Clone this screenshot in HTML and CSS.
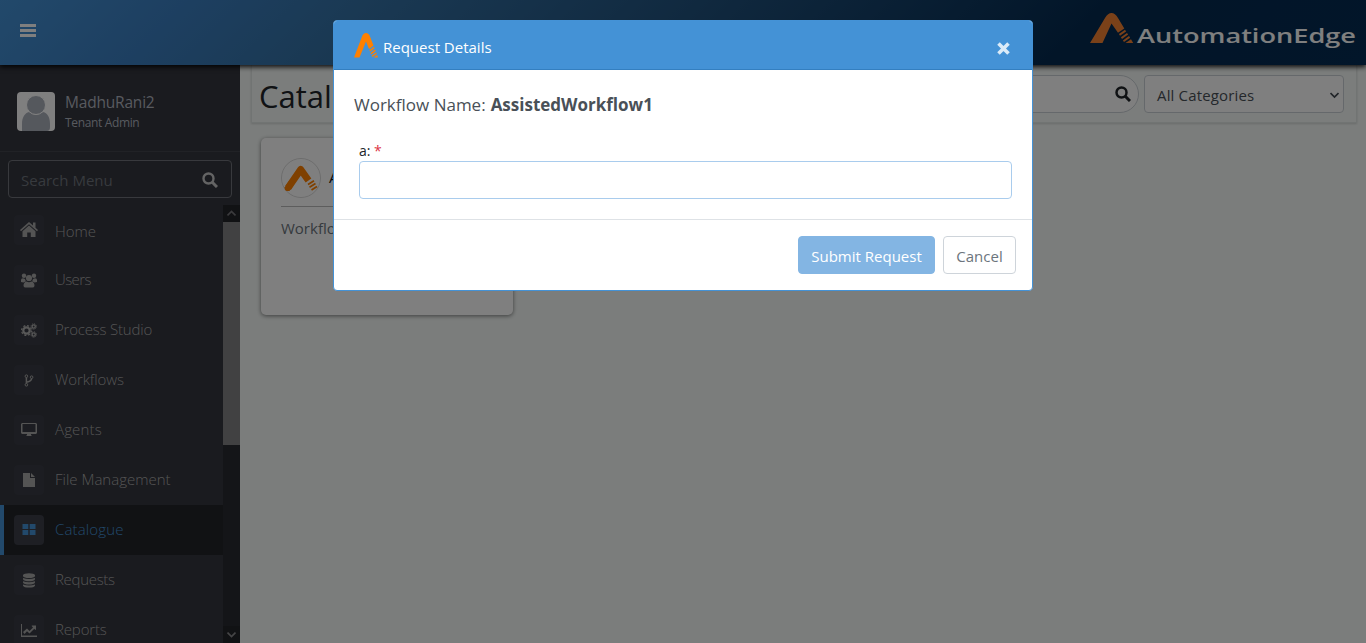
FILE: index.html
```html
<!DOCTYPE html>
<html lang="en">
<head>
<meta charset="utf-8">
<title>AutomationEdge - Catalogue</title>
<link rel="stylesheet" href="styles.css">
</head>
<body>
<div class="app">
  <header class="topbar">
    <svg class="burger" width="16" height="14" viewBox="0 0 16 14"><path fill="#fff" d="M0 0h16v3H0zM0 5h16v3H0zM0 10h16v3H0z"/></svg>
    <svg class="brand" width="270" height="40" viewBox="0 0 270 40">
      <path fill="#f58233" d="M0 31 15 6Q18 1 21.500 1T28 6L34.300 16.500 28 20.700 21.500 11.500 12.500 31zM35 17.700 28.900 22 30 23.700 36.100 19.400zM37 20.900 30.900 25.200 32 26.900 38.100 22.600zM39 24.100 32.900 28.400 34 30.100 40.100 25.800zM41 27.300 35.500 31H43.200z"/>
      <text x="47" y="31" textLength="219" lengthAdjust="spacingAndGlyphs" class="brand-text">AutomationEdge</text>
    </svg>
  </header>
  <div class="below">
    <aside class="sidebar">
      <div class="profile">
        <svg width="38" height="39" viewBox="0 0 38 39"><rect width="38" height="39" rx="4" fill="#fff"/><path fill="#abb0bb" d="M5 39V32C5 25 8 21 12 20Q19 26 26 20C31 21 33 26 33 32V35Q33 39 30 39z"/><circle cx="19" cy="13" r="9.500" fill="#abb0bb" stroke="#fff"/></svg>
        <div><div class="user">MadhuRani2</div><div class="role">Tenant Admin</div></div>
      </div>
      <div class="menu-search"><span>Search Menu</span>
        <svg width="16" height="16" viewBox="0 0 16 16" fill="none" stroke="#c8c8c8"><circle cx="6.500" cy="6.500" r="5" stroke-width="2.400"/><path stroke-width="3" d="m10 10 5 5"/></svg>
      </div>
      <div class="menu-area">
        <nav class="menu">
          <div class="item first"><span class="ico"><svg width="18" height="16" viewBox="0 0 18 16"><path d="M9 0 13 3.500V.5H15.500V5.800L18 8 17 9.200 9 2.200 1 9.200 0 8zM9 3.500 15.500 9.200V15H10.800V10.500H7.200V15H2.500V9.200z"/></svg></span><span class="lbl home">Home</span></div>
          <div class="item"><span class="ico"><svg width="16" height="15" viewBox="0 0 16 15"><circle cx="3" cy="2.800" r="2.200"/><circle cx="13" cy="2.800" r="2.200"/><circle cx="8" cy="5" r="3.100"/><path d="M0 9V7Q0 5.200 2 5.200L4 6Q4.500 8 5 8.300 3 9 2.500 9.500zM16 9V7Q16 5.200 14 5.200L12 6Q11.500 8 11 8.300 13 9 13.500 9.500zM2.500 13Q2.500 9 5.500 8.500 8 10 10.500 8.500 13.500 9 13.500 13 13 14.500 11.500 14.500H4.500Q3 14.500 2.500 13"/></svg></span><span class="lbl users">Users</span></div>
          <div class="item"><span class="ico"><svg class="line" width="16" height="15" viewBox="0 0 16 15" stroke="#b0b0b0"><circle cx="5.500" cy="7.500" r="3.200" stroke-width="2.200"/><circle cx="5.500" cy="7.500" r="4.900" stroke-width="1.300" stroke-dasharray="2 1.850"/><circle cx="12.700" cy="3.500" r="1.600" stroke-width="1.300"/><circle cx="12.700" cy="3.500" r="2.700" stroke-dasharray="1.100 1"/><circle cx="12.700" cy="11.500" r="1.600" stroke-width="1.300"/><circle cx="12.700" cy="11.500" r="2.700" stroke-dasharray="1.100 1"/></svg></span><span class="lbl process">Process Studio</span></div>
          <div class="item"><span class="ico"><svg class="line" width="10" height="13" viewBox="0 0 10 13" stroke="#aaa"><circle cx="2.400" cy="2.200" r="1.300"/><circle cx="2.400" cy="10.800" r="1.300"/><circle cx="7.600" cy="3.200" r="1.300"/><path stroke-width="1.500" d="M2.400 3.500v6M7.600 4.500Q7.600 7.300 2.400 8.300"/></svg></span><span class="lbl workflows">Workflows</span></div>
          <div class="item"><span class="ico"><svg width="16" height="14" viewBox="0 0 16 14"><path fill-rule="evenodd" d="M1 0H15L16 1V10L15 11H10V12L11 13H5L6 12V11H1L0 10V1zM1.500 1V9H14.500V1z"/></svg></span><span class="lbl agents">Agents</span></div>
          <div class="item"><span class="ico"><svg width="12" height="14" viewBox="0 0 12 14"><path d="M0 0H7V5H12V14H0zM8 0 12 4H8z"/></svg></span><span class="lbl files">File Management</span></div>
          <div class="item active"><span class="ico"><svg width="14" height="12" viewBox="0 0 14 12"><path d="M.5 0H6.300V5H.5zM7.700 0H13.500V5H7.700zM.5 6H6.300V11H.5zM7.700 6H13.500V11H7.700z"/></svg></span><span class="lbl catalogue">Catalogue</span></div>
          <div class="item"><span class="ico"><svg width="12" height="15" viewBox="0 0 12 15"><path d="M0 2Q1 .3 6 .3T12 2V3.200Q11 5 6 5T0 3.200zM0 5Q6 7 12 5V6.300Q11 8.300 6 8.300T0 6.300zM0 8.300Q6 10.300 12 8.300V9.500Q11 11.500 6 11.500T0 9.500zM0 11.500Q6 13.500 12 11.500V12.700Q11 14.600 6 14.600T0 12.700z"/></svg></span><span class="lbl requests">Requests</span></div>
          <div class="item"><span class="ico"><svg width="16" height="13" viewBox="0 0 16 13"><path d="M0 0H1V11.500H16V13H0zM2 8 6 4.500 8.500 7 12 3.500 10.800 2.300V1.500H15V5.700H14.200L13.300 4.800 8.500 9.500 6 7.200 3.500 10z"/></svg></span><span class="lbl reports">Reports</span></div>
        </nav>
        <div class="scroll">
          <div class="sbtn"><svg width="9" height="7" viewBox="0 0 9 7"><path fill="none" stroke="#77777a" stroke-width="1.700" d="m.5 5.500 4-4 4 4"/></svg></div>
          <div class="thumb"></div>
          <div class="sbtn down"><svg width="9" height="7" viewBox="0 0 9 7"><path fill="none" stroke="#8b8b8d" stroke-width="1.700" d="m.5 1.500 4 4 4-4"/></svg></div>
        </div>
      </div>
    </aside>
    <main class="main">
      <div class="titlebar">
        <h1>Catalogue</h1>
        <div class="find"><svg width="16" height="16" viewBox="0 0 16 16" fill="none" stroke="#212529"><circle cx="6.500" cy="6.500" r="5" stroke-width="2.500"/><path stroke-width="3" d="m10 10 5 5"/></svg></div>
        <div class="category"><span>All Categories</span><svg width="9" height="7" viewBox="0 0 9 7"><path fill="none" stroke="#444b52" stroke-width="1.700" d="m.5 1 4 4 4-4"/></svg></div>
      </div>
      <section class="card">
        <div class="card-head">
          <svg width="40" height="40" viewBox="0 0 40 40"><circle cx="20" cy="20" r="19.500" fill="none" stroke="#dadada"/><path fill="none" stroke="#ff8000" stroke-width="7" stroke-linejoin="round" d="M7 30 19.700 11.500 27.500 22.500"/><path fill="#ff8000" d="M3.500 29.500 8 23 12 28 8.500 33H5.500Q3.500 32.500 3.500 29.500"/><path stroke="#ff8000" stroke-width="1.800" d="m27 26.500 6-3.700M28.500 29.300l6-3.700M30.500 32l5.500-3.400"/></svg>
          <span>AssistedWorkflow1</span>
        </div>
        <p>Workflow</p>
      </section>
    </main>
  </div>
</div>
<div class="backdrop">
  <div class="dialog">
    <div class="dialog-head">
      <svg width="24" height="25" viewBox="0 0 24 25"><path fill="#ff8000" d="M0 24.500 8 3.500Q9.200 0 12 0T16 3.500L19.500 12.500 15 16 12 8.500 5.500 24.500zM20 13.800 15.400 17.200 16 18.600 20.600 15.200zM21.100 16.600 16.500 20 17.100 21.400 21.700 18zM22.200 19.400 17.600 22.800 18.200 24 22.800 20.800zM23.200 22 19.500 24.500H24z"/></svg>
      <span class="dialog-title">Request Details</span>
      <svg class="close" width="13" height="13" viewBox="0 0 13 13"><path stroke="#dbebf8" stroke-width="3.600" d="m1.500 1.500 10 10m0-10-10 10"/></svg>
    </div>
    <div class="dialog-body">
      <div class="wf"><span>Workflow Name:</span><b>AssistedWorkflow1</b></div>
      <label for="a">a: <em>*</em></label>
      <input id="a" type="text">
    </div>
    <div class="dialog-foot"><button class="submit">Submit Request</button><button class="cancel">Cancel</button></div>
  </div>
</div>
</body>
</html>
```
FILE: styles.css
```css
* { box-sizing: border-box; }
body { margin: 0; font-family: "Open Sans", "Noto Sans", sans-serif; font-size: 15px; overflow: hidden; color: #212529; }
svg { display: block; flex: none; }
.app { height: 643px; display: flex; flex-direction: column; background: #f7fbf9; }
.topbar { height: 65px; flex: none; display: flex; justify-content: space-between; padding: 12px 6px 0 20px; background: linear-gradient(135deg, #4492d6 0%, #3b7fc2 13%, #3573a8 25%, #20517d 50%, #042a50 78%, #042c54 100%); box-shadow: 0 2px 5px rgba(0,0,0,.9); position: relative; z-index: 1; }
.burger { margin-top: 12px; }
.brand-text { font: 600 19.500px "Open Sans", sans-serif; fill: #fff; }
.below { flex: 1; min-height: 0; display: flex; }
.sidebar { width: 240px; flex: none; background: #34363e; display: flex; flex-direction: column; color: #b0b4be; }
.profile { height: 87px; flex: none; display: flex; gap: 10px; padding: 27px 17px 0; border-bottom: 1px solid #42444c; }
.user { font-size: 15.500px; line-height: 20px; letter-spacing: -.2px; }
.role { font-size: 12px; line-height: 21px; letter-spacing: -.35px; }
.menu-search { height: 38px; flex: none; margin: 8px; border: 1px solid #71737a; border-radius: 4px; display: flex; align-items: center; justify-content: space-between; padding: 2px 13px 0 12px; color: #6f747d; }
.menu-area { flex: 1; min-height: 0; display: flex; overflow: hidden; margin-top: -1px; }
.menu { width: 223px; }
.item { height: 50px; display: flex; align-items: center; gap: 11px; padding-left: 14px; color: #a9a9a9; }
.ico { width: 30px; height: 30px; background: #393b44; border-radius: 4px; display: flex; align-items: center; justify-content: center; }
.ico svg { fill: currentColor; }
.ico .line { fill: none; }
.lbl { font-weight: 300; line-height: 20px; padding-bottom: 2px; }
.first .lbl { padding: 1px 0 0; }
.users { letter-spacing: -.6px; }
.process { letter-spacing: -.2px; }
.workflows { letter-spacing: -.1px; }
.requests { letter-spacing: -.3px; }
.reports { letter-spacing: -.15px; }
.agents, .catalogue { letter-spacing: .15px; }
.active { background: #222428; border-left: 4px solid #4492d6; padding-left: 10px; color: #4492d6; }
.active .ico { background: #3c3e48; }
.scroll { width: 17px; background: #292a31; display: flex; flex-direction: column; }
.sbtn { height: 17px; display: flex; align-items: center; justify-content: center; background: #232429; }
.thumb { height: 223px; background: #828284; }
.down { margin-top: auto; }
.main { flex: 1; padding: 0 9px 0 11px; }
.titlebar { height: 58px; display: flex; align-items: flex-start; padding: 10px 12px 0 7px; border: 1px solid #e3e8e6; border-top: 0; box-shadow: 0 1px 2px rgba(0,0,0,.15); }
h1 { margin: 1px auto 0 0; font-size: 31px; line-height: 40px; font-weight: 400; }
.find { width: 320px; height: 38px; border: 1px solid #cbd1d6; border-radius: 19px; background: #fff; display: flex; align-items: center; justify-content: flex-end; padding-right: 7px; margin-right: 5px; }
.category { width: 200px; height: 38px; border: 1px solid #cbd1d6; border-radius: 4px; background: #fff; display: flex; align-items: center; justify-content: space-between; padding: 2px 4px 0 12px; color: #495057; letter-spacing: .15px; }
.card { width: 252px; height: 177px; margin: 15px 0 0 10px; background: #fff; border-radius: 5px; box-shadow: 0 1px 4px rgba(0,0,0,.5); padding: 20px; color: #111; }
.card-head { height: 49px; display: flex; gap: 8px; border-bottom: 1px solid #bbb; line-height: 39px; overflow: hidden; }
.card p { margin: 10px 0 0; color: #6c757d; line-height: 22px; }
.backdrop { position: fixed; inset: 0; z-index: 5; background: rgba(0,0,0,.5); padding-top: 20px; }
.dialog { width: 700px; height: 271px; margin: 0 auto; background: #fff; border: 1px solid #4492d6; border-radius: 4px; overflow: hidden; }
.dialog-head { height: 49px; background: #4492d6; border-bottom: 1px solid #347fc0; display: flex; padding: 12px 22px 0 20px; gap: 5px; color: #fff; }
.dialog-title { line-height: 29px; }
.close { margin: 9px 0 0 auto; }
.dialog-body { height: 149px; padding: 21px 20px 0; }
.wf { font-size: 17px; line-height: 28px; color: #495057; display: flex; gap: 5px; }
.dialog label { display: block; margin: 22px 0 0 5px; font-size: 14px; line-height: 20px; }
.dialog em { color: #dc3545; font-style: normal; }
.dialog input { display: block; width: 653px; height: 38px; margin-left: 5px; border: 1px solid #a9cced; border-radius: 4px; background: #fff; }
.dialog-foot { height: 71px; border-top: 1px solid #dee2e6; display: flex; justify-content: flex-end; gap: 8px; padding: 16px 16px 0 0; }
.dialog-foot button { height: 38px; padding: 1px 0 0; border-radius: 4px; font: 15px "Open Sans", sans-serif; white-space: nowrap; }
.submit { width: 137px; border: 1px solid #83b5e3; background: #83b5e3; color: #fff; }
.cancel { width: 73px; border: 1px solid #ced4da; background: #fff; color: #6c757d; }
```
